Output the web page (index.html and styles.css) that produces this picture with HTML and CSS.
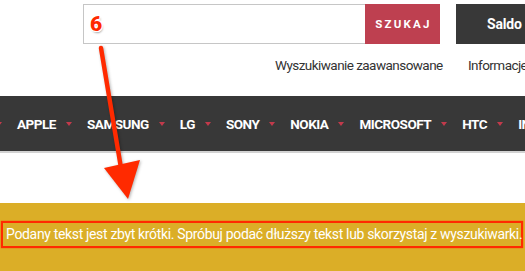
FILE: index.html
```html
<!DOCTYPE html>
<html lang="pl">
<head>
<meta charset="utf-8">
<title>Szukaj</title>
<link rel="stylesheet" href="styles.css">
</head>
<body>
<div class="page">
  <header class="header">
    <div class="search-row">
      <div class="search-box"></div>
      <button class="search-btn">SZUKAJ</button>
      <div class="saldo">Saldo</div>
    </div>
    <div class="links-row">
      <a class="link adv">Wyszukiwanie zaawansowane</a>
      <a class="link info">Informacje</a>
    </div>
  </header>
  <nav class="nav">
    <ul class="nav-list">
      <li class="nav-item"><span class="caret"></span></li>
      <li class="nav-item"><span class="nav-text">APPLE</span><span class="caret"></span></li>
      <li class="nav-item"><span class="nav-text">SAMSUNG</span><span class="caret"></span></li>
      <li class="nav-item"><span class="nav-text">LG</span><span class="caret"></span></li>
      <li class="nav-item"><span class="nav-text">SONY</span><span class="caret"></span></li>
      <li class="nav-item"><span class="nav-text">NOKIA</span><span class="caret"></span></li>
      <li class="nav-item"><span class="nav-text">MICROSOFT</span><span class="caret"></span></li>
      <li class="nav-item"><span class="nav-text">HTC</span><span class="caret"></span></li>
      <li class="nav-item"><span class="nav-text">INNE</span><span class="caret"></span></li>
    </ul>
  </nav>
  <div class="spacer"></div>
  <section class="notice">
    <p class="notice-box">Podany tekst jest zbyt krótki. Spróbuj podać dłuższy tekst lub skorzystaj z wyszukiwarki.</p>
  </section>
  <div class="annot-num">6</div>
  <svg class="annot-arrow" width="525" height="271" viewBox="0 0 525 271">
    <line x1="101" y1="48" x2="121" y2="168" stroke="#ff2a00" stroke-width="4.5" stroke-linecap="round"/>
    <polygon points="104,168 140,160 128,199" fill="#ff2a00"/>
  </svg>
</div>
</body>
</html>
```
FILE: styles.css
```css
* { box-sizing: border-box; }
html, body { margin: 0; padding: 0; }
body {
  width: 525px;
  height: 271px;
  overflow: hidden;
  background: #fff;
  font-family: "Roboto", "Liberation Sans", sans-serif;
}
.page { position: relative; width: 525px; height: 271px; overflow: hidden; }

.header { height: 96px; }
.search-row {
  display: flex;
  padding-top: 4px;
  padding-left: 83px;
  height: 44px;
}
.search-row > * { flex-shrink: 0; }
.search-box {
  width: 282px;
  height: 40px;
  border: 1px solid #c6c6c6;
  border-right: none;
  background: #fff;
}
.search-btn {
  width: 75px;
  height: 40px;
  border: none;
  margin: 0;
  padding: 0 0 0 2px;
  background: #be4050;
  color: #fff;
  font-family: "Roboto", sans-serif;
  font-weight: 700;
  font-size: 11.5px;
  letter-spacing: 2.2px;
}
.saldo {
  margin-left: 16px;
  width: 120px;
  height: 40px;
  background: #383838;
  color: #fff;
  font-weight: 700;
  font-size: 14px;
  padding-left: 31px;
  line-height: 40px;
  letter-spacing: -0.2px;
}
.links-row {
  display: flex;
  padding-top: 11px;
  font-size: 13.5px;
  color: #333;
  line-height: 20px;
}
.link { white-space: nowrap; letter-spacing: -0.55px; flex-shrink: 0; }
.link.adv { margin-left: 275px; width: 166px; }
.link.info { margin-left: 27px; }

.nav {
  height: 57px;
  background: #383838;
  border-bottom: 2px solid #d2d2d2;
}
.nav-list {
  list-style: none;
  margin: 0 0 0 -14px;
  padding: 0;
  display: flex;
  height: 55px;
  align-items: center;
  white-space: nowrap;
}
.nav-item {
  display: flex;
  align-items: center;
  margin-right: 15px;
  flex-shrink: 0;
}
.nav-text {
  color: #fff;
  font-weight: 700;
  font-size: 13.5px;
  letter-spacing: -0.48px;
}
.caret {
  margin-left: 10px;
  width: 0;
  height: 0;
  border-left: 3.5px solid transparent;
  border-right: 3.5px solid transparent;
  border-top: 4px solid #c23a4b;
}

.spacer { height: 50px; }
.notice {
  height: 68px;
  background: #dbae27;
  padding-top: 18px;
}
.notice-box {
  margin: 0 0 0 1px;
  width: 522px;
  height: 27px;
  border: 2px solid #ff2a00;
  box-shadow: 0 0 1px #ff2a00;
  color: #fff;
  font-size: 14px;
  line-height: 23px;
  padding-left: 3px;
  white-space: nowrap;
  letter-spacing: -0.34px;
}

.annot-num {
  position: absolute;
  left: 90px;
  top: 12px;
  font-family: "Roboto", sans-serif;
  font-weight: 900;
  font-size: 21px;
  color: #ff2a00;
  text-shadow: -1px -1px 0 #fff, 1px -1px 0 #fff, -1px 1px 0 #fff, 1px 1px 0 #fff, 1px 2px 2px rgba(0,0,0,0.35);
}
.annot-arrow {
  position: absolute;
  left: 0;
  top: 0;
  pointer-events: none;
  filter: drop-shadow(1px 1px 1.5px rgba(0,0,0,0.3));
}
```
